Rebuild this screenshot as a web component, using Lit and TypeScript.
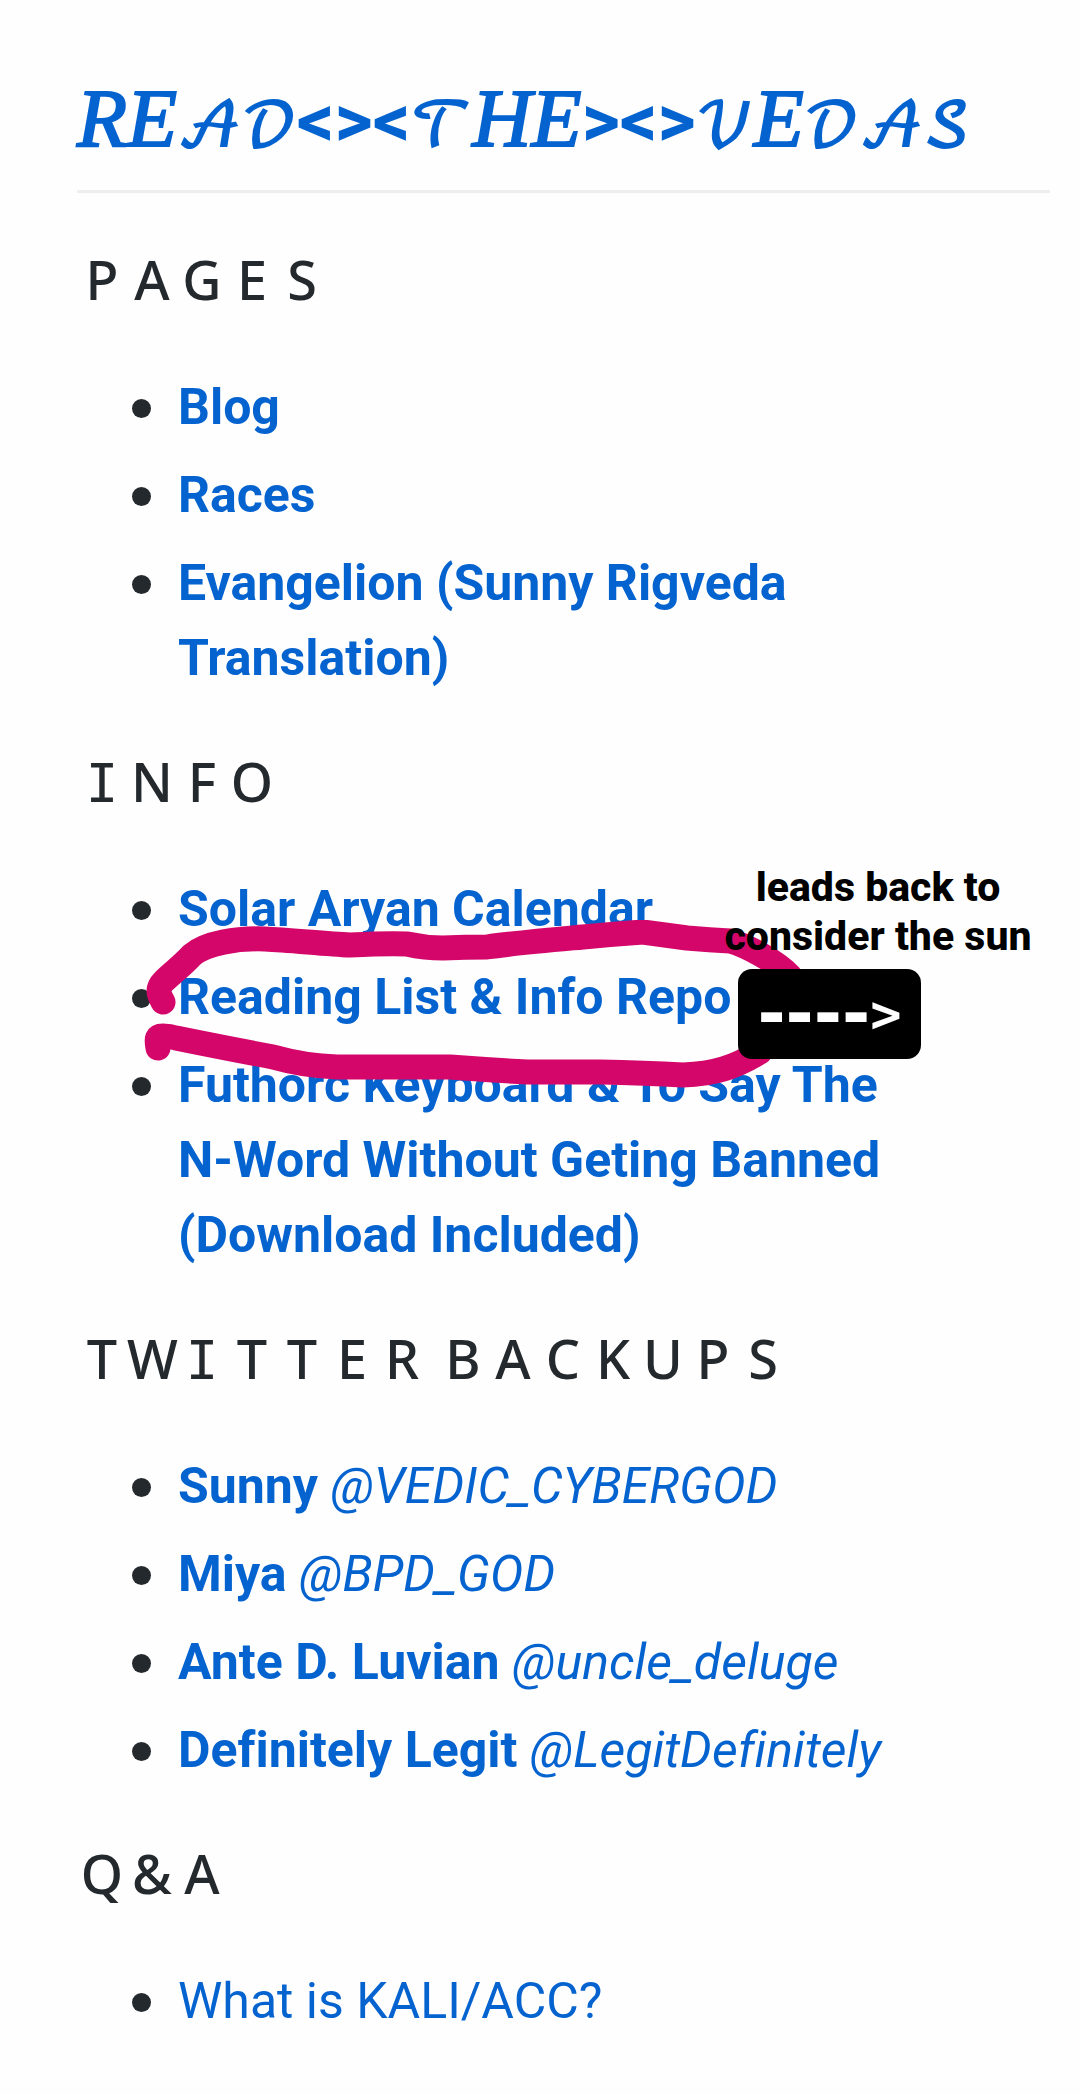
import { LitElement, html, css } from "lit";
import { customElement } from "lit/decorators.js";
import { classMap } from "lit/directives/class-map.js";

interface Entry {
  label: string;
  handle?: string;
  plain?: boolean;
}

const PAGES: Entry[] = [
  { label: "Blog" },
  { label: "Races" },
  { label: "Evangelion (Sunny Rigveda Translation)" },
];

const INFO: Entry[] = [
  { label: "Solar Aryan Calendar" },
  { label: "Reading List & Info Repo" },
  { label: "Futhorc Keyboard & To Say The N-Word Without Geting Banned (Download Included)" },
];

const BACKUPS: Entry[] = [
  { label: "Sunny", handle: "@VEDIC_CYBERGOD" },
  { label: "Miya", handle: "@BPD_GOD" },
  { label: "Ante D. Luvian", handle: "@uncle_deluge" },
  { label: "Definitely Legit", handle: "@LegitDefinitely" },
];

const QUESTIONS: Entry[] = [{ label: "What is KALI/ACC?", plain: true }];

@customElement("app-root")
export class AppRoot extends LitElement {
  static styles = css`
    :host {
      display: block;
      background: #fefefe;
      color: #24292e;
      font-family: Roboto, "Liberation Sans", sans-serif;
      font-size: 50px;
      line-height: 75px;
      font-variant-ligatures: none;
    }
    main {
      padding: 72px 30px 56px 77px;
    }
    a {
      color: #0563d0;
      text-decoration: none;
    }
    h1 {
      margin: 0;
      height: 118px;
      border-bottom: 3px solid #eeeeef;
      font-weight: 400;
      line-height: 80px;
      white-space: nowrap;
    }
    .serif {
      font-family: "Liberation Serif", serif;
      font-style: italic;
      font-size: 82px;
      -webkit-text-stroke: 2px currentColor;
    }
    .script {
      font-family: "DejaVu Math TeX Gyre", "Noto Sans Math", serif;
      font-size: 60px;
      -webkit-text-stroke: 2px currentColor;
    }
    .angle {
      font-family: Roboto, sans-serif;
      font-weight: 700;
      font-size: 74px;
    }
    h2 {
      display: flex;
      gap: 11px;
      margin: 53px 0 58px;
      font-family: "Noto Sans", sans-serif;
      font-size: 54px;
      font-weight: 500;
      line-height: 66px;
    }
    .word {
      display: flex;
      align-items: baseline;
    }
    .letter {
      width: 50px;
      text-align: center;
    }
    .slab {
      font-family: "DejaVu Sans Mono", monospace;
      line-height: 54px;
    }
    ul {
      display: flex;
      flex-direction: column;
      gap: 13px;
      margin: 0;
      padding: 0 120px 0 55px;
      list-style: none;
    }
    li {
      display: flex;
      gap: 27px;
    }
    li::before {
      content: "";
      flex: none;
      width: 19px;
      height: 19px;
      margin-top: 29px;
      border-radius: 50%;
      background: #24292e;
    }
    section + section {
      margin-top: -1px;
    }
    .info {
      position: relative;
    }
    .marker {
      position: absolute;
      left: 57px;
      top: 48px;
      width: 680px;
      height: 180px;
      pointer-events: none;
    }
    .note {
      position: absolute;
      left: 636px;
      top: -9px;
      width: 330px;
      margin: 0;
      color: #000;
      font-size: 41px;
      font-weight: 800;
      line-height: 49px;
      text-align: center;
    }
    .arrow {
      position: absolute;
      left: 661px;
      top: 97px;
      display: flex;
      align-items: center;
      justify-content: center;
      width: 183px;
      height: 90px;
      border-radius: 14px;
      background: #000;
      color: #fff;
      font-family: "DejaVu Sans", sans-serif;
      font-size: 68px;
      font-weight: 700;
      line-height: 90px;
    }
    .tip {
      font-family: "DejaVu Sans Mono", monospace;
      font-size: 52px;
    }
  `;

  private heading(text: string) {
    return html`<h2 aria-label=${text}>
      ${text.split(" ").map(
        (word) => html`<span class="word"
          >${[...word].map(
            (c) => html`<span class=${classMap({ letter: true, slab: c === "I" })}>${c}</span>`
          )}</span
        >`
      )}
    </h2>`;
  }

  private list(entries: Entry[]) {
    return html`<ul>
      ${entries.map(
        (e) => html`<li>
          <a href="#">${e.plain ? e.label : html`<b>${e.label}</b>`}${e.handle ? html` <i>${e.handle}</i>` : ""}</a>
        </li>`
      )}
    </ul>`;
  }

  render() {
    return html`<main>
      <h1>
        <a href="#"><span class="serif">RE</span><span class="script">𝒜𝒟</span><span class="angle">&lt;&gt;&lt;</span><span class="script">𝒯</span><span class="serif">HE</span><span class="angle">&gt;&lt;&gt;</span><span class="script">𝒱</span><span class="serif">E</span><span class="script">𝒟𝒜𝒮</span></a>
      </h1>
      <section>${this.heading("PAGES")} ${this.list(PAGES)}</section>
      <section>
        ${this.heading("INFO")}
        <div class="info">
          ${this.list(INFO)}
          <svg class="marker" viewBox="134 920 680 180" fill="none" stroke="#d40669" stroke-width="25" stroke-linecap="round" stroke-linejoin="round" aria-hidden="true">
            <path d="M163 1002 C158 993 157 988 164 981 C172 973 182 966 192 955 C206 943 237 938 265 939 C290 940 325 944 350 945 C370 944 390 943 407 944 Q425 948 443 948 Q466 947 487 947 C515 943 550 940 583 937 Q614 934 643 932 Q665 935 687 938 Q710 940 730 941 C745 945 776 961 790 976"/>
            <path d="M158 1048 C156 1038 157 1036 163 1036 Q170 1036 176 1038 Q220 1047 273 1057 Q305 1066 337 1067 H450 Q490 1070 527 1072 H600 Q645 1073 683 1075 C715 1074 735 1067 760 1052"/>
          </svg>
          <p class="note">leads back to<br />consider the sun</p>
          <span class="arrow">----<span class="tip">&gt;</span></span>
        </div>
      </section>
      <section>${this.heading("TWITTER BACKUPS")} ${this.list(BACKUPS)}</section>
      <section>${this.heading("Q&A")} ${this.list(QUESTIONS)}</section>
    </main>`;
  }
}
